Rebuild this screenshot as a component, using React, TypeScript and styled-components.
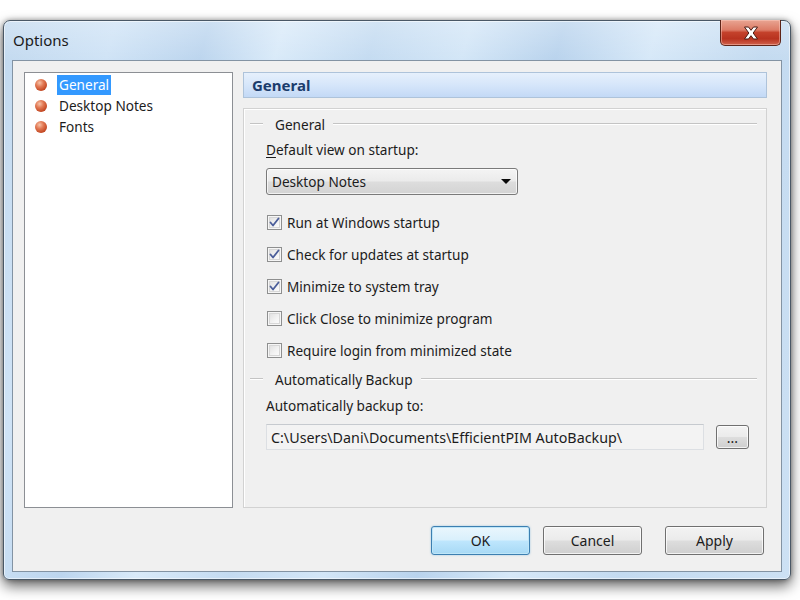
import React from "react";
import styled, { createGlobalStyle, css } from "styled-components";

const GlobalStyle = createGlobalStyle`
  html, body {
    margin: 0;
    padding: 0;
    background: #ffffff;
  }
  body {
    font-family: "Noto Sans", "Open Sans", "Liberation Sans", sans-serif;
    font-size: 13.5px;
    color: #1c1c1c;
  }
  * { box-sizing: border-box; }
`;

const Page = styled.div`
  width: 800px;
  height: 600px;
  padding: 20px 0 0 3px;
  overflow: hidden;
`;

const Window = styled.div`
  width: 788px;
  height: 560px;
  display: flex;
  flex-direction: column;
  border: 1px solid #4a5866;
  border-radius: 7px 7px 6px 6px;
  background:
    linear-gradient(180deg, rgba(255, 255, 255, 0.25) 0%, rgba(255, 255, 255, 0) 40px),
    linear-gradient(
      105deg,
      #c2d9ef 0%,
      #cfe3f6 12%,
      #bcd5ee 22%,
      #d9eaf9 30%,
      #c4dbf1 40%,
      #d3e6f7 50%,
      #b9d3ed 60%,
      #d6e8f8 70%,
      #c3daf0 82%,
      #cde1f4 100%
    );
  box-shadow: 0 6px 14px rgba(0, 0, 0, 0.6), 0 0 5px rgba(0, 0, 0, 0.35),
    inset 0 0 0 1px rgba(255, 255, 255, 0.55);
`;

const TitleBar = styled.div`
  height: 39px;
  display: flex;
  align-items: flex-start;
  justify-content: space-between;
  padding-left: 9px;
`;

const Title = styled.div`
  font-size: 15px;
  line-height: 39px;
  color: #1b1b1b;
`;

const CloseButton = styled.div`
  width: 61px;
  height: 26px;
  margin: -1px 9px 0 0;
  display: flex;
  align-items: center;
  justify-content: center;
  border: 1px solid #5e2418;
  border-top: none;
  border-radius: 0 0 5px 5px;
  background: linear-gradient(
    180deg,
    #e9a593 0%,
    #dc7b66 40%,
    #c4412b 50%,
    #b8321f 75%,
    #d0624c 100%
  );
  box-shadow: inset 0 0 0 1px rgba(255, 210, 200, 0.45);
`;

const Client = styled.div`
  flex: 1;
  margin: 0 8px 7px 8px;
  border: 1px solid #8393a3;
  background: #f0f0f0;
  display: flex;
  flex-direction: column;
  padding: 11px 14px 16px 11px;
`;

const Body = styled.div`
  height: 436px;
  display: grid;
  grid-template-columns: 209px 524px;
  column-gap: 10px;
`;

const Tree = styled.ul`
  margin: 0;
  padding: 1px 0 0 10px;
  list-style: none;
  background: #ffffff;
  border: 1px solid #8c8f94;
`;

const TreeItem = styled.li`
  height: 21px;
  display: flex;
  align-items: center;
  gap: 10px;
`;

const Bullet = styled.span`
  width: 12px;
  height: 12px;
  border-radius: 50%;
  flex: none;
  background: radial-gradient(
    circle at 38% 32%,
    #f7c3a8 0%,
    #e27a55 35%,
    #c1441f 75%,
    #9a2e12 100%
  );
`;

const ItemLabel = styled.span<{ $selected?: boolean }>`
  padding: 1px 2px;
  line-height: 18px;
  font-size: 13.6px;
  ${(p) =>
    p.$selected &&
    css`
      background: #3399ff;
      color: #ffffff;
    `}
`;

const RightColumn = styled.div`
  display: flex;
  flex-direction: column;
`;

const Header = styled.div`
  height: 26px;
  margin-bottom: 10px;
  padding-left: 8px;
  display: flex;
  align-items: center;
  font-size: 15px;
  font-weight: 700;
  color: #1b3c6c;
  border: 1px solid #aec3da;
  background: linear-gradient(180deg, #e6f0fc 0%, #d6e6fa 50%, #c3d9f6 100%);
`;

const Panel = styled.div`
  flex: 1;
  display: flex;
  flex-direction: column;
  padding: 5px 9px 0 6px;
  border: 1px solid #d2d2d2;
  box-shadow: inset 1px 1px 0 #ffffff;
`;

const GroupTitle = styled.div<{ $top?: number }>`
  height: 20px;
  margin-top: ${(p) => p.$top ?? 0}px;
  display: flex;
  align-items: center;
  font-size: 13.6px;
  color: #1c1c1c;
  &::before,
  &::after {
    content: "";
    height: 1px;
    background: #c4c4c4;
    border-bottom: 1px solid #ffffff;
    box-sizing: content-box;
  }
  &::before {
    width: 13px;
    margin-right: 12px;
  }
  &::after {
    flex: 1;
    margin-left: 8px;
  }
`;

const Field = styled.div<{ $top: number }>`
  margin: ${(p) => p.$top}px 0 0 16px;
`;

const Label = styled.div`
  height: 20px;
  line-height: 20px;
  font-size: 13.6px;
`;

const Mnemonic = styled.span`
  text-decoration: underline;
  text-underline-offset: 2px;
`;

const Combo = styled.div`
  width: 252px;
  height: 27px;
  display: flex;
  align-items: center;
  justify-content: space-between;
  padding: 0 6px 0 5px;
  font-size: 13.6px;
  border: 1px solid #7a7a7a;
  border-radius: 3px;
  background: linear-gradient(180deg, #f4f4f4 0%, #ebebeb 48%, #dddddd 52%, #d3d3d3 100%);
  box-shadow: inset 0 0 0 1px rgba(255, 255, 255, 0.7);
`;

const Arrow = styled.span`
  width: 0;
  height: 0;
  border-left: 5px solid transparent;
  border-right: 5px solid transparent;
  border-top: 5px solid #0a0a0a;
`;

const CheckList = styled.div`
  display: flex;
  flex-direction: column;
  gap: 12px;
`;

const CheckRow = styled.label`
  height: 20px;
  display: flex;
  align-items: center;
  gap: 5px;
  font-size: 13.6px;
`;

const Box = styled.span`
  width: 15px;
  height: 15px;
  margin-left: 1px;
  flex: none;
  display: flex;
  align-items: center;
  justify-content: center;
  border: 1px solid #8e8f8f;
  background: linear-gradient(135deg, #dcdcdc 0%, #f4f4f4 60%, #ffffff 100%);
  box-shadow: inset 0 0 0 1px #f6f6f6, inset 0 0 0 2px #d7d7d7;
`;

const PathRow = styled.div`
  display: flex;
  align-items: center;
  gap: 12px;
`;

const PathBox = styled.div`
  width: 438px;
  height: 26px;
  display: flex;
  align-items: center;
  padding-left: 4px;
  font-size: 14.3px;
  background: #f3f3f3;
  border: 1px solid #dcdfe3;
  border-top-color: #c6cacf;
`;

const Button = styled.button<{ $default?: boolean; $w: number; $h: number }>`
  width: ${(p) => p.$w}px;
  height: ${(p) => p.$h}px;
  padding: 0;
  font-family: inherit;
  font-size: 14px;
  color: #1c1c1c;
  border: 1px solid #707070;
  border-radius: 3px;
  background: linear-gradient(180deg, #f3f3f3 0%, #ebebeb 48%, #dddddd 52%, #cfcfcf 100%);
  box-shadow: inset 0 0 0 1px rgba(255, 255, 255, 0.75);
  ${(p) =>
    p.$default &&
    css`
      border-color: #3c7fb1;
      background: linear-gradient(180deg, #eaf6fd 0%, #d9f0fc 48%, #bee6fd 52%, #a7d9f5 100%);
      box-shadow: inset 0 0 0 1px #bfe6f8, 0 0 2px rgba(60, 150, 210, 0.5);
    `}
`;

const ButtonRow = styled.div`
  margin-top: 18px;
  display: flex;
  justify-content: flex-end;
  padding-right: 3px;
`;

const ButtonSlot = styled.div<{ $gap: number }>`
  margin-left: ${(p) => p.$gap}px;
`;

function CloseGlyph() {
  return (
    <svg width="16" height="14" viewBox="0 0 16 14">
      <path
        d="M1.5 1 H5.5 L8 4.3 L10.5 1 H14.5 L10.2 7 L14.5 13 H10.5 L8 9.7 L5.5 13 H1.5 L5.8 7 Z"
        fill="#ffffff"
        stroke="#4a1a12"
        strokeWidth="1"
        strokeLinejoin="round"
      />
    </svg>
  );
}

function CheckMark() {
  return (
    <svg width="11" height="11" viewBox="0 0 11 11">
      <path
        d="M1.5 5.5 L4 8.5 L9.5 1.5"
        fill="none"
        stroke="#4b5e9a"
        strokeWidth="1.8"
        strokeLinecap="round"
        strokeLinejoin="round"
      />
    </svg>
  );
}

const pages = ["General", "Desktop Notes", "Fonts"];

const options = [
  { label: "Run at Windows startup", checked: true },
  { label: "Check for updates at startup", checked: true },
  { label: "Minimize to system tray", checked: true },
  { label: "Click Close to minimize program", checked: false },
  { label: "Require login from minimized state", checked: false },
];

export default function App() {
  return (
    <>
      <GlobalStyle />
      <Page>
        <Window>
          <TitleBar>
            <Title>Options</Title>
            <CloseButton>
              <CloseGlyph />
            </CloseButton>
          </TitleBar>
          <Client>
            <Body>
              <Tree>
                {pages.map((name, i) => (
                  <TreeItem key={name}>
                    <Bullet />
                    <ItemLabel $selected={i === 0}>{name}</ItemLabel>
                  </TreeItem>
                ))}
              </Tree>
              <RightColumn>
                <Header>General</Header>
                <Panel>
                  <GroupTitle>General</GroupTitle>
                  <Field $top={6}>
                    <Label>
                      <Mnemonic>D</Mnemonic>efault view on startup:
                    </Label>
                  </Field>
                  <Field $top={8}>
                    <Combo>
                      <span>Desktop Notes</span>
                      <Arrow />
                    </Combo>
                  </Field>
                  <Field $top={17}>
                    <CheckList>
                      {options.map((o) => (
                        <CheckRow key={o.label}>
                          <Box>{o.checked && <CheckMark />}</Box>
                          {o.label}
                        </CheckRow>
                      ))}
                    </CheckList>
                  </Field>
                  <GroupTitle $top={9}>Automatically Backup</GroupTitle>
                  <Field $top={7}>
                    <Label>Automatically backup to:</Label>
                  </Field>
                  <Field $top={8}>
                    <PathRow>
                      <PathBox>C:\Users\Dani\Documents\EfficientPIM AutoBackup\</PathBox>
                      <Button $w={33} $h={24}>...</Button>
                    </PathRow>
                  </Field>
                </Panel>
              </RightColumn>
            </Body>
            <ButtonRow>
              <ButtonSlot $gap={0}>
                <Button $default $w={99} $h={29}>OK</Button>
              </ButtonSlot>
              <ButtonSlot $gap={13}>
                <Button $w={99} $h={29}>Cancel</Button>
              </ButtonSlot>
              <ButtonSlot $gap={23}>
                <Button $w={99} $h={29}>Apply</Button>
              </ButtonSlot>
            </ButtonRow>
          </Client>
        </Window>
      </Page>
    </>
  );
}
